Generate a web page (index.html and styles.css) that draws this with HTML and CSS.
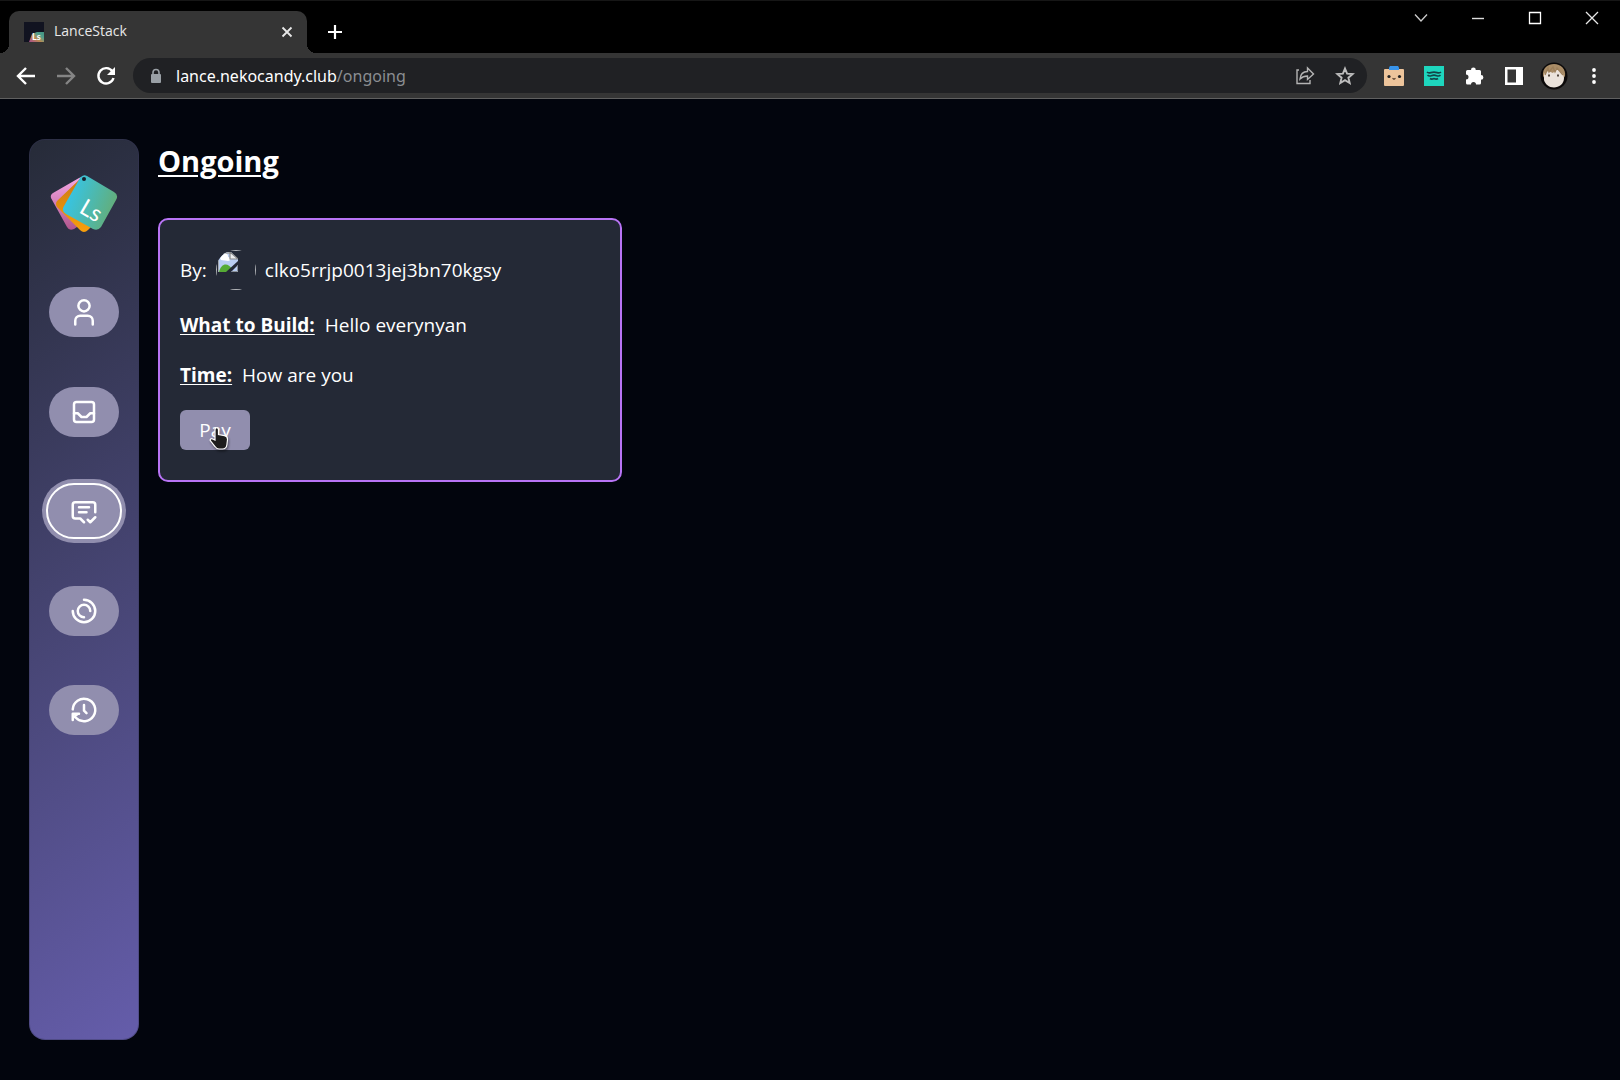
FILE: index.html
```html
<!DOCTYPE html>
<html lang="en">
<head>
<meta charset="utf-8">
<meta name="viewport" content="width=device-width, initial-scale=1">
<title>LanceStack</title>
<link rel="stylesheet" href="styles.css">
</head>
<body>
<header class="browser">
  <div class="titlebar">
    <div class="tab">
      <svg class="favicon" viewBox="0 0 20 20" aria-hidden="true">
        <defs><linearGradient id="fav" x1="0" y1="1" x2="1" y2="0"><stop offset="0" stop-color="#c04fa0"/><stop offset=".4" stop-color="#d9a05a"/><stop offset=".7" stop-color="#5cb8a0"/><stop offset="1" stop-color="#4aa88f"/></linearGradient></defs>
        <rect width="20" height="20" fill="#111320"/>
        <path d="M5 20l3-8 5-2h7v10z" fill="url(#fav)" opacity=".85"/>
        <text x="8" y="18" font-family="Lato, sans-serif" font-size="9" font-weight="700" fill="#fff">Ls</text>
      </svg>
      <span class="tab-title">LanceStack</span>
      <button class="tab-close" aria-label="Close tab"><svg viewBox="0 0 12 12" width="12" height="12"><path d="M1.500 1.500l9 9M10.500 1.500l-9 9" stroke="#e8e8e8" stroke-width="1.800"/></svg></button>
    </div>
    <button class="new-tab" aria-label="New tab"><svg viewBox="0 0 16 16" width="16" height="16"><path d="M8 1v14M1 8h14" stroke="#fff" stroke-width="2.200"/></svg></button>
    <div class="window-controls">
      <button aria-label="Search tabs"><svg viewBox="0 0 14 14" width="14" height="14"><path d="M1 3.500l6 6.500 6-6.500" fill="none" stroke="#ccc" stroke-width="1.300"/></svg></button>
      <button aria-label="Minimize"><svg viewBox="0 0 14 14" width="14" height="14"><path d="M1 7.500h12" stroke="#ddd" stroke-width="1.400"/></svg></button>
      <button aria-label="Maximize"><svg viewBox="0 0 14 14" width="14" height="14"><path d="M1.500 1.500h11v11h-11z" fill="none" stroke="#fff" stroke-width="1.300"/></svg></button>
      <button aria-label="Close"><svg viewBox="0 0 14 14" width="14" height="14"><path d="M1 1l12 12M13 1L1 13" stroke="#e8e8e8" stroke-width="1.300"/></svg></button>
    </div>
  </div>
  <div class="toolbar">
    <button class="tool" aria-label="Back"><svg viewBox="0 0 20 20" width="20" height="20"><path d="M19 10H3M10 2L2 10l8 8" fill="none" stroke="#fff" stroke-width="2.400"/></svg></button>
    <button class="tool" aria-label="Forward" disabled><svg viewBox="0 0 20 20" width="20" height="20"><path d="M1 10h16M10 2l8 8-8 8" fill="none" stroke="#858585" stroke-width="2.400"/></svg></button>
    <button class="tool" aria-label="Reload"><svg viewBox="0 0 20 20" width="20" height="20"><path d="M16.500 5.500A7.700 7.700 0 1 0 17.500 12" fill="none" stroke="#fff" stroke-width="2.400"/><path d="M19 1v8h-8z" fill="#fff"/></svg></button>
    <div class="omnibox">
      <button class="lock" aria-label="Site information"><svg viewBox="0 0 12 16" width="12" height="16"><rect x="1" y="6" width="10" height="9" rx="1" fill="#9aa0a6"/><path d="M3 7V4.500a3 3 0 0 1 6 0V7" fill="none" stroke="#9aa0a6" stroke-width="1.600"/></svg></button>
      <div class="url" role="textbox" aria-label="Address">lance.nekocandy.club<span class="path">/ongoing</span></div>
      <button class="tool" aria-label="Share"><svg viewBox="0 0 20 20" width="20" height="20"><path d="M4 4H2v13.500h13V14" fill="none" stroke="#b4b4b4" stroke-width="1.400"/><path d="M5 13c.5-5 3-7.500 7.500-7.500V2L18.500 8l-6 5.500V10C9 10 7 11 5 13z" fill="none" stroke="#b4b4b4" stroke-width="1.400"/></svg></button>
      <button class="tool" aria-label="Bookmark"><svg viewBox="0 0 20 20" width="20" height="20"><path d="M10 2.600l2.100 5.100 5.500.4-4.200 3.600 1.300 5.400-4.700-2.900-4.700 2.900 1.300-5.400L2.400 8.100l5.500-.4z" fill="none" stroke="#bdbdbd" stroke-width="1.900"/></svg></button>
    </div>
    <button class="tool" aria-label="Robot extension"><svg viewBox="0 0 20 20" width="20" height="20"><rect y="3" width="20" height="17" rx="1" fill="#edc49b"/><path d="M6 0h8l1 1.500V4H5V1.500z" fill="#3793ea"/><circle cx="5" cy="10.500" r="1.600" fill="#222"/><circle cx="15.500" cy="10.500" r="1.600" fill="#222"/><path d="M8.500 12.300l1.500 1 1.500-1" fill="none" stroke="#5b4432" stroke-width="1.200"/></svg></button>
    <button class="tool" aria-label="Wave extension"><svg viewBox="0 0 20 20" width="20" height="20"><rect width="20" height="20" fill="#1ed6be"/><path d="M3 6c2 2 3.500.2 7 .2s5 1.800 7-.2M3.500 9.200c2.500 2 3.500 0 6.500 0s4 2 6.500 0M6 12.500c2 1.500 2 .2 4 .2s2 1.300 4-.2" fill="none" stroke="#134447" stroke-width="1.700"/></svg></button>
    <button class="tool" aria-label="Extensions"><svg viewBox="0 0 20 20" width="20" height="20"><path d="M2 5.500A1.500 1.500 0 0 1 3.500 4H7a2.400 2.400 0 0 1 4.800 0h3.700A1.500 1.500 0 0 1 17 5.500V9a2.400 2.400 0 0 1 0 4.800V17a1.500 1.500 0 0 1-1.500 1.500H12a2.500 2.500 0 0 0-5 0H3.500A1.500 1.500 0 0 1 2 17v-3.500a2.500 2.500 0 0 0 0-5z" fill="#fff"/></svg></button>
    <button class="tool" aria-label="Side panel"><svg viewBox="0 0 18 18" width="18" height="18"><path d="M0 0h18v18H0zM2.500 2.500v13H11v-13z" fill="#fff" fill-rule="evenodd"/></svg></button>
    <button class="tool" aria-label="Profile"><svg viewBox="0 0 28 28" width="28" height="28"><circle cx="14" cy="14" r="13.500" fill="#0c0a0a"/><path d="M3 14C2 6 8 2 14 2c7 0 12 5 11 12l-3 5H6z" fill="#a98c66"/><path d="M4 12l4-3 5 2 4-5 6 6 1 4c0 6-5 9.500-10 9.500S5 22 4 18z" fill="#ebe3db"/><path d="M5 13L8 6l1 4 4-5 2 5 2-4 6 7" fill="none" stroke="#9c7f5a" stroke-width="1.300"/><path d="M8 13.500h2M17 13.500h2" stroke="#54483f" stroke-width="1.800"/></svg></button>
    <button class="tool" aria-label="Menu"><svg viewBox="0 0 4 18" width="4" height="18"><circle cx="2" cy="3" r="1.900" fill="#fff"/><circle cx="2" cy="9" r="1.900" fill="#fff"/><circle cx="2" cy="15" r="1.900" fill="#fff"/></svg></button>
  </div>
</header>

<div class="page">
  <aside class="sidebar">
    <svg class="logo" viewBox="0 0 68 60" role="img" aria-label="LanceStack">
      <defs>
        <linearGradient id="pink" x1="0" y1="0" x2="0" y2="1"><stop offset="0" stop-color="#f5a8e6"/><stop offset="1" stop-color="#b0558c"/></linearGradient>
        <linearGradient id="orange" x1="0" y1="0" x2="0" y2="1"><stop offset="0" stop-color="#c97812"/><stop offset="1" stop-color="#f99f0b"/></linearGradient>
        <linearGradient id="teal" gradientUnits="userSpaceOnUse" x1="16" y1="22" x2="62" y2="38"><stop offset="0" stop-color="#35c5e8"/><stop offset="1" stop-color="#62ae7c"/></linearGradient>
      </defs>
      <path d="M29 4L3 19Q0 21 1 24L17 53Q19 57 24 55L52 36 36 6Q33 2 29 4z" fill="url(#pink)"/>
      <path d="M31 4L7 27Q5 30 7 33L30 56Q34 60 38 56L58 36 38 4Q34 1 31 4z" fill="url(#orange)"/>
      <path d="M37 2L64 18Q69 21 66 26L51 53Q48 57 43 55L16 40Q11 37 14 32L30 4Q33 0 37 2z" fill="url(#teal)"/>
      <circle cx="34" cy="5" r="2" fill="#18202b"/>
      <text x="28" y="38" transform="rotate(30 28 38)" font-family="Lato, sans-serif" font-size="23" fill="#fff">Ls</text>
    </svg>
    <nav class="nav" aria-label="Main">
      <button class="nav-item" aria-label="Profile"><svg viewBox="0 0 24 24"><circle cx="12" cy="7" r="4.500"/><path d="M5 22v-3a4 4 0 0 1 4-4h6a4 4 0 0 1 4 4v3"/></svg></button>
      <button class="nav-item" aria-label="Inbox"><svg viewBox="0 0 24 24"><rect x="4" y="4" width="16" height="16" rx="2"/><path d="M4 13h3l3 3h4l3-3h3"/></svg></button>
      <button class="nav-item active" aria-label="Ongoing" aria-current="page"><svg viewBox="0 0 24 24"><path d="M21 13V7a2 2 0 0 0-2-2H5a2 2 0 0 0-2 2v9a2 2 0 0 0 2 2h4l3 3M8 9h8M8 13h6M15 19l2 2 4-4"/></svg></button>
      <button class="nav-item" aria-label="Progress"><svg viewBox="0 0 24 24"><path d="M12 3a9 9 0 1 1-9 9M17 12a5 5 0 1 0-5 5"/></svg></button>
      <button class="nav-item" aria-label="History"><svg viewBox="0 0 24 24"><path d="M3 11.500A9 9 0 1 1 5.500 18.200M12 8v4.500l2 2"/><path d="M3 20v-5h5M3.500 18l3-2.500"/></svg></button>
    </nav>
  </aside>
  <main class="content">
    <h1>Ongoing</h1>
    <article class="card">
      <div class="row author">
        <span>By:</span>
        <span class="avatar"><span class="avatar-frame">
          <svg viewBox="0 0 20 20" width="20" height="20" aria-hidden="true"><path d="M0 0h13l7 7v13H0z" fill="#b9cdf2"/><path d="M0 0h13v2H0zM0 0h1v20H0z" fill="#a4a9b0"/><path d="M3 8a3 2.500 0 0 1 1-4 3 3 0 0 1 6 1c3 0 3 4 0 4z" fill="#fff"/><path d="M1 20c2-9 9-10 13-3l-3 3z" fill="#55ab35"/><path d="M12 0v7h8z" fill="#eee" stroke="#888" stroke-width="1.200"/><path d="M8 20L20 9v4l-7 7z" fill="#242936"/><path d="M14 19.500h5.500V14" fill="none" stroke="#8c9299"/></svg>
        </span></span>
        <span>clko5rrjp0013jej3bn70kgsy</span>
      </div>
      <div class="row"><strong>What to Build:</strong><span>Hello everynyan</span></div>
      <div class="row"><strong>Time:</strong><span>How are you</span></div>
      <button class="pay">Pay
        <svg class="cursor" viewBox="0 0 20 24" width="20" height="24" aria-hidden="true"><path d="M6 14V4c0-3 3.500-3 3.500 0v4.500l6 1.200c2.500.5 3.200 1.500 3 4l-.6 5c-.4 3-1.900 4.300-4.400 4.300H10c-2 0-3-1-4-2.500l-4.500-5.500c-1-1.700.8-3 2.200-2z" fill="#1d1d1d" stroke="#fff" stroke-width="1.200"/></svg>
      </button>
    </article>
  </main>
</div>
</body>
</html>
```

FILE: styles.css
```css
* { box-sizing: border-box; }

body {
  margin: 0;
  min-height: 100vh;
  display: flex;
  flex-direction: column;
  background: #02050d;
  color: #fff;
  font-family: "Segoe UI", "Open Sans", sans-serif;
}

button {
  padding: 0;
  border: 0;
  background: none;
  color: inherit;
  font: inherit;
  display: flex;
  align-items: center;
  justify-content: center;
}

svg { display: block; flex: none; }

/* Browser chrome */
.titlebar {
  display: flex;
  height: 53px;
  padding-left: 9px;
  background: #000;
  border-top: 1px solid #161616;
}

.tab {
  position: relative;
  align-self: flex-end;
  display: flex;
  align-items: center;
  width: 298px;
  height: 42px;
  padding: 0 12px 0 15px;
  border-radius: 10px 10px 0 0;
  background: #353535;
}

.tab::before,
.tab::after {
  content: "";
  position: absolute;
  bottom: 0;
  width: 9px;
  height: 9px;
}

.tab::before {
  right: 100%;
  background: radial-gradient(circle at 0 0, transparent 9px, #353535 9px);
}

.tab::after {
  left: 100%;
  background: radial-gradient(circle at 100% 0, transparent 9px, #353535 9px);
}

.favicon { width: 20px; height: 20px; }

.tab-title {
  flex: 1;
  margin-left: 10px;
  font-size: 14px;
  line-height: 20px;
  padding-bottom: 2px;
  color: #e8e8e8;
}

.tab-close { width: 16px; height: 16px; }

.new-tab { width: 40px; margin: 10px 0 0 8px; }

.window-controls { display: flex; margin-left: auto; }

.window-controls button { width: 57px; height: 34px; }

.toolbar {
  display: flex;
  align-items: center;
  height: 46px;
  padding: 0 6px;
  background: #353535;
  border-bottom: 1px solid #606060;
}

.tool { width: 40px; height: 36px; }

.omnibox {
  flex: 1;
  display: flex;
  align-items: center;
  height: 35px;
  margin: 0 7px;
  padding: 0 2px 0 12px;
  border-radius: 18px;
  background: #202124;
}

.lock { width: 22px; height: 22px; }

.url {
  flex: 1;
  margin-left: 9px;
  font-family: "Segoe UI", "Noto Sans", sans-serif;
  font-size: 16px;
  line-height: 24px;
}

.path { color: #8b8e92; }

/* Page */
.page {
  flex: 1;
  display: flex;
  gap: 19px;
  padding: 40px 29px;
}

.sidebar {
  display: flex;
  flex-direction: column;
  align-items: center;
  width: 110px;
  padding-top: 34px;
  border: 1px solid #37365a66;
  border-radius: 16px;
  background: linear-gradient(145deg, #262b38, #655dab) border-box;
}

.logo { width: 68px; height: 60px; }

.nav {
  display: flex;
  flex-direction: column;
  justify-content: space-between;
  height: 448px;
  margin-top: 53px;
}

.nav-item {
  width: 70px;
  height: 50px;
  border-radius: 25px;
  background: #918eae;
}

.nav-item svg {
  width: 30px;
  height: 30px;
  fill: none;
  stroke: #fff;
  stroke-width: 2;
  stroke-linecap: round;
  stroke-linejoin: round;
}

.nav-item.active {
  outline: 2px solid #fff;
  outline-offset: 1px;
  box-shadow: 0 0 0 7px #918eae;
}

.content { flex: 1; }

h1 {
  margin: 0 0 35px;
  font-size: 29px;
  line-height: 44px;
  font-weight: 700;
  text-decoration: underline 2px;
  text-underline-offset: 3px;
}

.card {
  display: flex;
  flex-direction: column;
  gap: 20px;
  max-width: 464px;
  padding: 30px 20px;
  border: 2px solid #b874f5;
  border-radius: 10px;
  background: #242936;
}

.row {
  display: flex;
  align-items: center;
  gap: 10px;
  font-size: 19px;
  line-height: 30px;
}

.author { gap: 9px; }

.row strong {
  font-weight: 700;
  text-decoration: underline 1px;
  text-underline-offset: 2px;
  text-decoration-skip-ink: none;
}

.avatar {
  width: 40px;
  height: 40px;
  border-radius: 50%;
  overflow: hidden;
}

.avatar-frame {
  display: block;
  height: 40px;
  padding: 1px;
  border: 1px solid #b4b6ba;
}

.pay {
  position: relative;
  align-self: flex-start;
  width: 70px;
  height: 40px;
  border-radius: 6px;
  background: #918eae;
  font-size: 19px;
}

.cursor {
  position: absolute;
  left: 29px;
  top: 16px;
  filter: drop-shadow(1px 2px 1px #0006);
}
```
